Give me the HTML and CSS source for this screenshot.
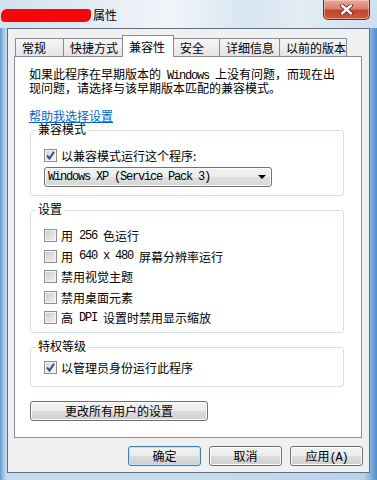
FILE: index.html
```html
<!DOCTYPE html>
<html lang="zh-CN">
<head>
    <meta charset="UTF-8">
    <meta name="viewport" content="width=device-width, initial-scale=1.0">
    <title>属性</title>
    <link rel="stylesheet" href="styles.css">
</head>
<body>
    <div class="window">
        <!-- Title bar -->
        <div class="titlebar">
            <span class="redact"></span>
            <span class="title">属性</span>
            <span class="close">
                <svg width="15" height="11" viewBox="0 0 15 11">
                    <path d="M3 1.5 L12 9.5 M12 1.5 L3 9.5" stroke="#5a1f14" stroke-width="4" stroke-linecap="round"/>
                    <path d="M3 1.5 L12 9.5 M12 1.5 L3 9.5" stroke="#ffffff" stroke-width="2.4" stroke-linecap="round"/>
                </svg>
            </span>
        </div>

        <div class="client">
            <!-- Tabs -->
            <div class="tabs">
                <div class="tab t1">常规</div>
                <div class="tab t2">快捷方式</div>
                <div class="tab t3 active">兼容性</div>
                <div class="tab t4">安全</div>
                <div class="tab t5">详细信息</div>
                <div class="tab t6">以前的版本</div>
            </div>

            <div class="panel">
                <p class="intro">如果此程序在早期版本的<span class="en"> Windows </span>上没有问题，而现在出现问题，请选择与该早期版本匹配的兼容模式。</p>
                <a class="help" href="#">帮助我选择设置</a>

                <fieldset class="group g1">
                    <legend>兼容模式</legend>
                    <div class="row first">
                        <span class="box checked">
                            <svg width="11" height="11" viewBox="0 0 11 11"><path d="M2 5.5 L4.5 8.5 L9 1.8" fill="none" stroke="#34508a" stroke-width="2"/></svg>
                        </span>以兼容模式运行这个程序:
                    </div>
                    <div class="select">
                        <span class="en">Windows XP (Service Pack 3)</span>
                        <span class="arrow"></span>
                    </div>
                </fieldset>

                <fieldset class="group g2">
                    <legend>设置</legend>
                    <div class="row"><span class="box"></span>用<span class="en"> 256 </span>色运行</div>
                    <div class="row"><span class="box"></span>用<span class="en"> 640 x 480 </span>屏幕分辨率运行</div>
                    <div class="row"><span class="box"></span>禁用视觉主题</div>
                    <div class="row"><span class="box"></span>禁用桌面元素</div>
                    <div class="row"><span class="box"></span>高<span class="en"> DPI </span>设置时禁用显示缩放</div>
                </fieldset>

                <fieldset class="group g3">
                    <legend>特权等级</legend>
                    <div class="row">
                        <span class="box checked">
                            <svg width="11" height="11" viewBox="0 0 11 11"><path d="M2 5.5 L4.5 8.5 L9 1.8" fill="none" stroke="#34508a" stroke-width="2"/></svg>
                        </span>以管理员身份运行此程序
                    </div>
                </fieldset>

                <div class="btn wide">更改所有用户的设置</div>
            </div>

            <!-- Dialog buttons -->
            <div class="actions">
                <div class="btn default">确定</div>
                <div class="btn">取消</div>
                <div class="btn">应用<span class="en">(A)</span></div>
            </div>
        </div>
    </div>
</body>
</html>
```

FILE: styles.css
```css
body {
    margin: 0;
    font-family: "Noto Sans CJK SC", sans-serif;
    font-size: 12px;
    color: #000;
}
.window {
    width: 377px;
    height: 480px;
    overflow: hidden;
    background: linear-gradient(90deg, #5e9bcf 0, #a8cbe6 4px, #c4dbee 7px, #c9dcec 50%, #b7d3ea 364px, #7fb0da 371px, #4d8fc8 377px);
}
.titlebar {
    height: 28px;
    display: flex;
    align-items: center;
    background: linear-gradient(90deg, #d3e1ee 0, #e7eef5 30%, #f1f5f9 45%, #d8e6f1 65%, #e2ecf4 80%, #cfe0ee 100%);
}
.redact {
    width: 90px;
    height: 13px;
    margin-left: 1px;
    margin-top: 2px;
    background: #f4060b;
    border-radius: 6px 3px 6px 4px;
}
.title {
    line-height: 13px;
    margin-left: 2px;
}
.close {
    margin-left: auto;
    margin-right: 7px;
    align-self: flex-start;
    width: 45px;
    height: 19px;
    display: flex;
    align-items: center;
    justify-content: center;
    border: 1px solid #6b2a20;
    border-top: none;
    border-radius: 0 0 5px 5px;
    background: linear-gradient(#e8a89a 0%, #d8826f 45%, #c0442b 55%, #cf5a3a 100%);
    box-shadow: inset 0 0 0 1px rgba(255, 220, 210, 0.5);
}
.client {
    margin-left: 7px;
    width: 363px;
    height: 445px;
    box-sizing: border-box;
    border: 1px solid #5f6f80;
    background: #f0f0f0;
}
.tabs {
    display: flex;
    align-items: flex-end;
    padding: 6px 0 0 7px;
}
.tab {
    height: 18px;
    box-sizing: border-box;
    padding: 2px 0 0 6px;
    line-height: 13px;
    border: 1px solid #898c95;
    border-bottom: none;
    background: linear-gradient(#f6f6f6, #e4e4e4);
    margin-left: -1px;
    white-space: nowrap;
}
.tab.t1 { width: 49px; margin-left: 0; }
.tab.t2 { width: 60px; }
.tab.t3 { width: 52px; }
.tab.t4 { width: 47px; }
.tab.t5 { width: 61px; }
.tab.t6 { width: 68px; }
.tab.active {
    height: 22px;
    padding-top: 4px;
    margin-bottom: -1px;
    background: #fff;
    position: relative;
    z-index: 1;
}
.panel {
    margin-left: 6px;
    width: 348px;
    height: 382px;
    box-sizing: border-box;
    border: 1px solid #898c95;
    background: #fff;
    padding: 10px 14px 0;
}
.intro {
    margin: 0;
    width: 312px;
    line-height: 13px;
}
.en {
    font-family: "Liberation Mono", monospace;
    font-size: 12px;
    letter-spacing: -1.2px;
    line-height: 10px;
    white-space: pre;
}
.help {
    display: block;
    width: max-content;
    margin-top: 15px;
    line-height: 13px;
    color: #0066cc;
}
.group {
    margin: 0 0 0 1px;
    width: 314px;
    box-sizing: border-box;
    padding: 0 0 0 13px;
    border: 1px solid #d5dfe5;
    border-radius: 3px;
}
.group legend {
    margin-left: -8px;
    padding: 0 2px 4px;
    line-height: 13px;
}
.row {
    display: flex;
    align-items: center;
    height: 13px;
    line-height: 13px;
    white-space: nowrap;
}
.box {
    width: 13px;
    height: 13px;
    box-sizing: border-box;
    margin-right: 4px;
    border: 1px solid #8e8f8f;
    background: linear-gradient(135deg, #c9c9c9, #f3f3f3);
    box-shadow: inset 0 0 0 1px #f4f4f4;
    display: flex;
    align-items: center;
    justify-content: center;
}
.box.checked {
    background: linear-gradient(135deg, #d4d4d4, #fafafa);
}
.g1 { padding-bottom: 8px; }
.g1 .row.first { margin-top: 10px; }
.select {
    margin-top: 5px;
    width: 228px;
    height: 20px;
    box-sizing: border-box;
    border: 1px solid #707070;
    border-radius: 3px;
    background: linear-gradient(#f4f4f4, #ececec 50%, #e0e0e0 50%, #d6d6d6);
    box-shadow: inset 0 0 0 1px #fbfbfb;
    display: flex;
    align-items: center;
    padding: 0 5px 0 3px;
}
.arrow {
    margin-left: auto;
    width: 0;
    height: 0;
    border-left: 4px solid transparent;
    border-right: 4px solid transparent;
    border-top: 4px solid #000;
}
.g2 {
    margin-top: 6px;
    padding-top: 10px;
    padding-bottom: 8px;
}
.g2 .row + .row { margin-top: 7.5px; }
.g3 {
    margin-top: 6px;
    padding-top: 5px;
    padding-bottom: 12px;
}
.btn {
    height: 20px;
    box-sizing: border-box;
    border: 1px solid #707070;
    border-radius: 3px;
    background: linear-gradient(#f2f2f2, #ebebeb 50%, #dddddd 50%, #cfcfcf);
    box-shadow: inset 0 0 0 1px #fcfcfc;
    text-align: center;
    line-height: 17px;
    width: 73px;
}
.btn.wide {
    margin: 14px 0 0 1px;
    width: 178px;
}
.btn.default {
    border-color: #3c7fb1;
    box-shadow: inset 0 0 0 1px #bfe3f6;
}
.actions {
    display: flex;
    justify-content: flex-end;
    gap: 8px;
    padding: 8px 6px 0 0;
}
```
